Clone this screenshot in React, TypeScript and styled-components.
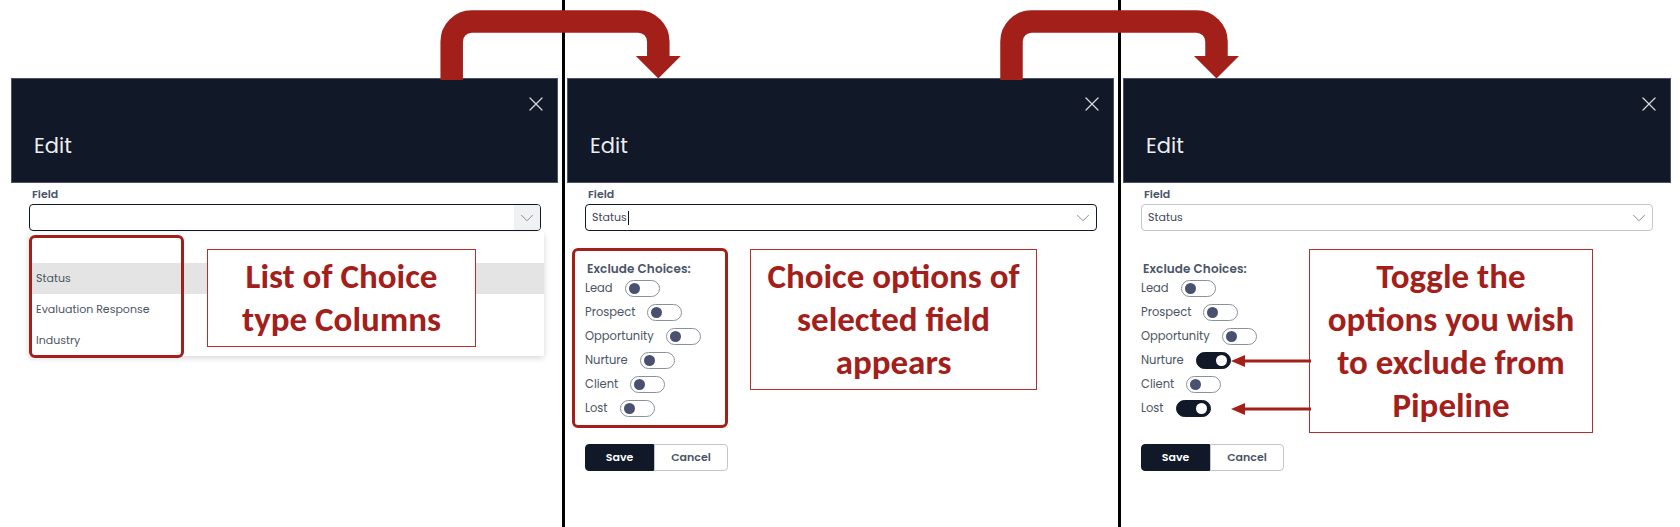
import React from 'react';
import styled, { createGlobalStyle } from 'styled-components';
import { ChevronDown, X } from 'lucide-react';

const RED = '#a3201a';
const NAVY = '#111827';

const GlobalStyle = createGlobalStyle`
  html, body {
    margin: 0;
    padding: 0;
    background: #fff;
  }
  body {
    font-family: 'Poppins', 'Inter', sans-serif;
    overflow: hidden;
  }
  * {
    box-sizing: border-box;
  }
`;

const Page = styled.div`
  position: relative;
  display: flex;
  width: 1680px;
  height: 527px;
  padding-left: 11px;
`;

const FlowArrows = styled.svg`
  position: absolute;
  top: 0;
  left: 0;
  z-index: 3;
  pointer-events: none;
`;

const Panel = styled.section<{ $width: number }>`
  width: ${(p) => p.$width}px;
  flex-shrink: 0;
  padding-top: 78px;
  display: flex;
  flex-direction: column;
`;

const Divider = styled.div`
  width: 3px;
  flex-shrink: 0;
  background: #000;
  margin: 0 2px 0 4px;
`;

const Header = styled.header`
  height: 105px;
  background: ${NAVY};
  border: 1px solid #4b5263;
  display: flex;
  flex-direction: column;
  padding: 13px 9px 0 22px;
`;

const CloseButton = styled.span`
  align-self: flex-end;
  display: flex;
  color: #d6d8de;
`;

const Title = styled.h2`
  margin: 17px 0 0;
  font-size: 21px;
  line-height: 26px;
  font-weight: 400;
  color: #eceef2;
`;

const Body = styled.div`
  padding-left: 18px;
  display: flex;
  flex-direction: column;
`;

const FieldLabel = styled.label`
  margin-top: 4px;
  padding-left: 3px;
  font-size: 11px;
  line-height: 14px;
  font-weight: 600;
  color: #4a5568;
`;

const SelectBox = styled.div<{ $focused?: boolean }>`
  margin-top: 3px;
  width: 512px;
  height: 27px;
  border: ${(p) => (p.$focused ? `1.5px solid ${NAVY}` : '1px solid #c3c6cd')};
  border-radius: 4px;
  display: flex;
  align-items: center;
  padding-left: 6px;
  font-size: 11px;
  color: #3f4656;
  overflow: hidden;
`;

const Caret = styled.span`
  width: 1px;
  height: 14px;
  background: #111;
  margin-left: 1px;
`;

const ChevronSlot = styled.span<{ $shaded?: boolean }>`
  margin-left: auto;
  width: 26px;
  height: 100%;
  display: flex;
  align-items: center;
  justify-content: center;
  background: ${(p) => (p.$shaded ? '#f0f1f3' : 'transparent')};
  color: #7b8190;
`;

const Dropdown = styled.ul`
  position: relative;
  margin: 1px 0 0;
  padding: 0;
  list-style: none;
  width: 515px;
  background: #fff;
  box-shadow: 0 2px 6px rgba(0, 0, 0, 0.16);
`;

const Option = styled.li<{ $active?: boolean }>`
  height: 31px;
  display: flex;
  align-items: center;
  padding-left: 7px;
  font-size: 11px;
  color: #4b5563;
  background: ${(p) => (p.$active ? '#e4e4e4' : 'transparent')};
`;

const ListHighlight = styled.div`
  position: absolute;
  left: 0;
  top: 3px;
  width: 155px;
  height: 123px;
  border: 3px solid ${RED};
  border-radius: 6px;
`;

const Callout = styled.div<{ $width: number; $height: number }>`
  width: ${(p) => p.$width}px;
  height: ${(p) => p.$height}px;
  border: 1.5px solid #b5302a;
  display: flex;
  flex-direction: column;
  justify-content: center;
  align-items: center;
  font-family: Carlito, 'Lato', sans-serif;
  font-weight: 700;
  font-size: 35px;
  line-height: 43px;
  color: ${RED};
  text-align: center;
  background: #fff;
`;

const FloatingCallout = styled(Callout)`
  position: absolute;
  left: 178px;
  top: 17px;
`;

const InlineCallout = styled(Callout)<{ $gap: number }>`
  position: relative;
  margin-left: ${(p) => p.$gap}px;
  margin-top: 1px;
`;

const Pointers = styled.svg`
  position: absolute;
  left: -79px;
  top: 0;
  overflow: visible;
`;

const ChoicesRow = styled.div`
  display: flex;
  align-items: flex-start;
  margin-top: 17px;
`;

const ChoicesBlock = styled.div<{ $highlight?: boolean }>`
  margin-left: -13px;
  width: 156px;
  border: 3px solid ${(p) => (p.$highlight ? RED : 'transparent')};
  border-radius: 6px;
  padding: 11px 0 5px 10px;
`;

const ExcludeLabel = styled.div`
  padding-left: 2px;
  font-size: 12px;
  line-height: 14px;
  font-weight: 600;
  letter-spacing: 0.1px;
  color: #4a5568;
`;

const ChoiceItem = styled.div`
  height: 24px;
  display: flex;
  align-items: center;
  gap: 12px;
  font-size: 11.5px;
  color: #4b5563;
`;

const Toggle = styled.span<{ $on?: boolean }>`
  position: relative;
  flex-shrink: 0;
  width: 35px;
  height: 17px;
  border-radius: 9px;
  border: 1px solid ${(p) => (p.$on ? NAVY : '#8b909d')};
  background: ${(p) => (p.$on ? NAVY : '#fff')};

  &::after {
    content: '';
    position: absolute;
    top: 2px;
    left: ${(p) => (p.$on ? '19px' : '3px')};
    width: 11px;
    height: 11px;
    border-radius: 50%;
    background: ${(p) => (p.$on ? '#fff' : '#4a5170')};
  }
`;

const Actions = styled.div`
  display: flex;
  margin-top: 16px;
`;

const Button = styled.button<{ $primary?: boolean }>`
  height: 27px;
  width: ${(p) => (p.$primary ? 69 : 74)}px;
  font-family: inherit;
  font-size: 11px;
  font-weight: 600;
  border: 1px solid ${(p) => (p.$primary ? NAVY : '#c3c6cd')};
  border-radius: ${(p) => (p.$primary ? '4px 0 0 4px' : '0 4px 4px 0')};
  background: ${(p) => (p.$primary ? NAVY : '#fff')};
  color: ${(p) => (p.$primary ? '#fff' : '#4a5568')};
  padding: 0;
`;

const choices = ['Lead', 'Prospect', 'Opportunity', 'Nurture', 'Client', 'Lost'];

const ModalHeader = () => (
  <Header>
    <CloseButton>
      <X size={24} strokeWidth={1.25} />
    </CloseButton>
    <Title>Edit</Title>
  </Header>
);

const ChoiceList: React.FC<{ highlight?: boolean; on?: string[] }> = ({ highlight, on = [] }) => (
  <ChoicesBlock $highlight={highlight}>
    <ExcludeLabel>Exclude Choices:</ExcludeLabel>
    {choices.map((c) => (
      <ChoiceItem key={c}>
        {c}
        <Toggle $on={on.includes(c)} />
      </ChoiceItem>
    ))}
  </ChoicesBlock>
);

const ActionButtons = () => (
  <Actions>
    <Button $primary>Save</Button>
    <Button>Cancel</Button>
  </Actions>
);

export default function App() {
  return (
    <Page>
      <GlobalStyle />
      <FlowArrows width={1680} height={80} viewBox="0 0 1680 80">
        {[
          [451.7, 658.3],
          [1011.5, 1216.5],
        ].map(([a, b]) => (
          <g key={a} fill={RED}>
            <path
              d={`M${a} 80 L${a} 41.5 A20 20 0 0 1 ${a + 20} 21.5 L${b - 20} 21.5 A20 20 0 0 1 ${b} 41.5 L${b} 57`}
              fill="none"
              stroke={RED}
              strokeWidth={22.5}
            />
            <polygon points={`${b - 22.5},56 ${b + 22.5},56 ${b},78.5`} />
          </g>
        ))}
      </FlowArrows>

      <Panel $width={547}>
        <ModalHeader />
        <Body>
          <FieldLabel>Field</FieldLabel>
          <SelectBox $focused>
            <ChevronSlot $shaded>
              <ChevronDown size={22} strokeWidth={1} />
            </ChevronSlot>
          </SelectBox>
          <Dropdown>
            <Option />
            <Option $active>Status</Option>
            <Option>Evaluation Response</Option>
            <Option>Industry</Option>
            <ListHighlight />
            <FloatingCallout $width={269} $height={98}>
              <div>List of Choice</div>
              <div>type Columns</div>
            </FloatingCallout>
          </Dropdown>
        </Body>
      </Panel>

      <Divider />

      <Panel $width={547}>
        <ModalHeader />
        <Body>
          <FieldLabel>Field</FieldLabel>
          <SelectBox $focused>
            Status
            <Caret />
            <ChevronSlot>
              <ChevronDown size={22} strokeWidth={1} />
            </ChevronSlot>
          </SelectBox>
          <ChoicesRow>
            <div>
              <ChoiceList highlight />
              <ActionButtons />
            </div>
            <InlineCallout $width={287} $height={141} $gap={22}>
              <div>Choice options of</div>
              <div>selected field</div>
              <div>appears</div>
            </InlineCallout>
          </ChoicesRow>
        </Body>
      </Panel>

      <Divider />

      <Panel $width={548}>
        <ModalHeader />
        <Body>
          <FieldLabel>Field</FieldLabel>
          <SelectBox>
            Status
            <ChevronSlot>
              <ChevronDown size={22} strokeWidth={1} />
            </ChevronSlot>
          </SelectBox>
          <ChoicesRow>
            <div>
              <ChoiceList on={['Nurture', 'Lost']} />
              <ActionButtons />
            </div>
            <InlineCallout $width={284} $height={184} $gap={25}>
              <Pointers width={79} height={184}>
                {[111, 159].map((y) => (
                  <g key={y} fill={RED}>
                    <line x1={12} y1={y} x2={80} y2={y} stroke={RED} strokeWidth={3} />
                    <polygon points={`0,${y} 14,${y - 6} 14,${y + 6}`} />
                  </g>
                ))}
              </Pointers>
              <div>Toggle the</div>
              <div>options you wish</div>
              <div>to exclude from</div>
              <div>Pipeline</div>
            </InlineCallout>
          </ChoicesRow>
        </Body>
      </Panel>
    </Page>
  );
}
